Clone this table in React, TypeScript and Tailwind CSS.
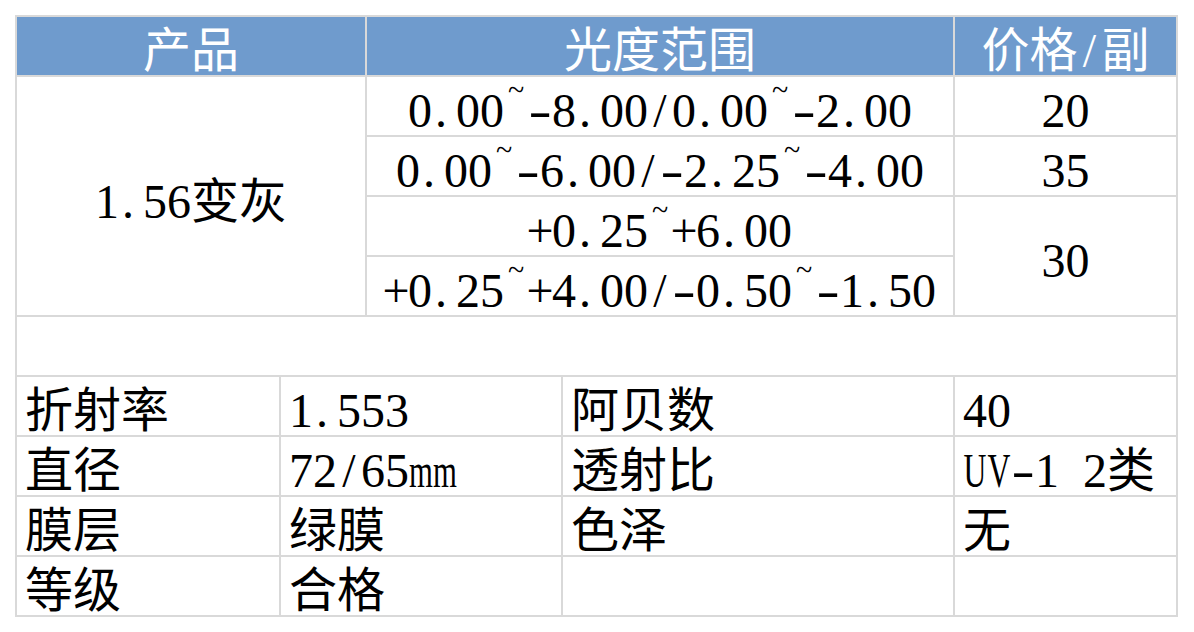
import React from "react";

function Ch({ ch }: { ch: string }) {
  if (ch === "~") {
    return (
      <span className="inline-flex w-[24px] justify-center text-[30px] leading-[20px] -translate-y-[27px]">
        ~
      </span>
    );
  }
  if (ch === ".") {
    return <span className="inline-flex w-[24px] justify-start pl-[3px]">.</span>;
  }
  if (ch === "-") {
    return <span className="inline-flex w-[24px] justify-center scale-x-[1.45]">-</span>;
  }
  if (ch === "m") {
    return <span className="inline-flex w-[24px] justify-center scale-x-[0.64]">m</span>;
  }
  if (ch === "U" || ch === "V") {
    return <span className="inline-flex w-[24px] justify-center scale-x-[0.66]">{ch}</span>;
  }
  if (ch === " ") {
    return <span className="inline-flex w-[24px]">&nbsp;</span>;
  }
  return <span className="inline-flex w-[24px] justify-center">{ch}</span>;
}

function Txt({ s }: { s: string }) {
  const parts: React.ReactNode[] = [];
  let cjk = "";
  s.split("").forEach((ch, i) => {
    if (/[\x20-\x7e]/.test(ch)) {
      if (cjk) {
        parts.push(<span key={"c" + i}>{cjk}</span>);
        cjk = "";
      }
      parts.push(<Ch key={i} ch={ch} />);
    } else {
      cjk += ch;
    }
  });
  if (cjk) parts.push(<span key="end">{cjk}</span>);
  return <span className="leading-[48px] whitespace-nowrap">{parts}</span>;
}

const cell = "bg-white flex items-end";
const center = "justify-center";
const left = "justify-start pl-2";

export default function App() {
  return (
    <div className="w-[1194px] h-[632px] bg-white pt-[15px] pl-[15px] font-['Liberation_Serif','Noto_Sans_CJK_SC',serif] text-[48px] text-black">
      <div className="inline-grid grid-cols-[262px_84px_194px_390px_221px] grid-rows-[repeat(10,58px)] gap-[2px] p-[2px] bg-[#d9d9d9]">
        {/* header */}
        <div className={`col-span-2 bg-[#6f9bcd] text-white flex items-end ${center}`}>
          <Txt s="产品" />
        </div>
        <div className={`col-span-2 bg-[#6f9bcd] text-white flex items-end ${center}`}>
          <Txt s="光度范围" />
        </div>
        <div className={`bg-[#6f9bcd] text-white flex items-end ${center}`}>
          <Txt s="价格/副" />
        </div>

        {/* product block */}
        <div className="col-span-2 row-span-4 bg-white flex items-center justify-center pt-[12px]">
          <Txt s="1.56变灰" />
        </div>
        <div className={`col-span-2 ${cell} ${center}`}>
          <Txt s="0.00~-8.00/0.00~-2.00" />
        </div>
        <div className={`${cell} ${center}`}>
          <Txt s="20" />
        </div>
        <div className={`col-span-2 ${cell} ${center}`}>
          <Txt s="0.00~-6.00/-2.25~-4.00" />
        </div>
        <div className={`${cell} ${center}`}>
          <Txt s="35" />
        </div>
        <div className={`col-span-2 ${cell} ${center}`}>
          <Txt s="+0.25~+6.00" />
        </div>
        <div className="row-span-2 bg-white flex items-center justify-center pt-[10px]">
          <Txt s="30" />
        </div>
        <div className={`col-span-2 ${cell} ${center}`}>
          <Txt s="+0.25~+4.00/-0.50~-1.50" />
        </div>

        {/* empty row */}
        <div className="col-span-5 bg-white" />

        {/* specs */}
        <div className={`${cell} ${left}`}><Txt s="折射率" /></div>
        <div className={`col-span-2 ${cell} ${left}`}><Txt s="1.553" /></div>
        <div className={`${cell} ${left}`}><Txt s="阿贝数" /></div>
        <div className={`${cell} ${left}`}><Txt s="40" /></div>

        <div className={`${cell} ${left}`}><Txt s="直径" /></div>
        <div className={`col-span-2 ${cell} ${left}`}><Txt s="72/65mm" /></div>
        <div className={`${cell} ${left}`}><Txt s="透射比" /></div>
        <div className={`${cell} ${left}`}><Txt s="UV-1 2类" /></div>

        <div className={`${cell} ${left}`}><Txt s="膜层" /></div>
        <div className={`col-span-2 ${cell} ${left}`}><Txt s="绿膜" /></div>
        <div className={`${cell} ${left}`}><Txt s="色泽" /></div>
        <div className={`${cell} ${left}`}><Txt s="无" /></div>

        <div className={`${cell} ${left}`}><Txt s="等级" /></div>
        <div className={`col-span-2 ${cell} ${left}`}><Txt s="合格" /></div>
        <div className={`${cell} ${left}`} />
        <div className={`${cell} ${left}`} />
      </div>
    </div>
  );
}
